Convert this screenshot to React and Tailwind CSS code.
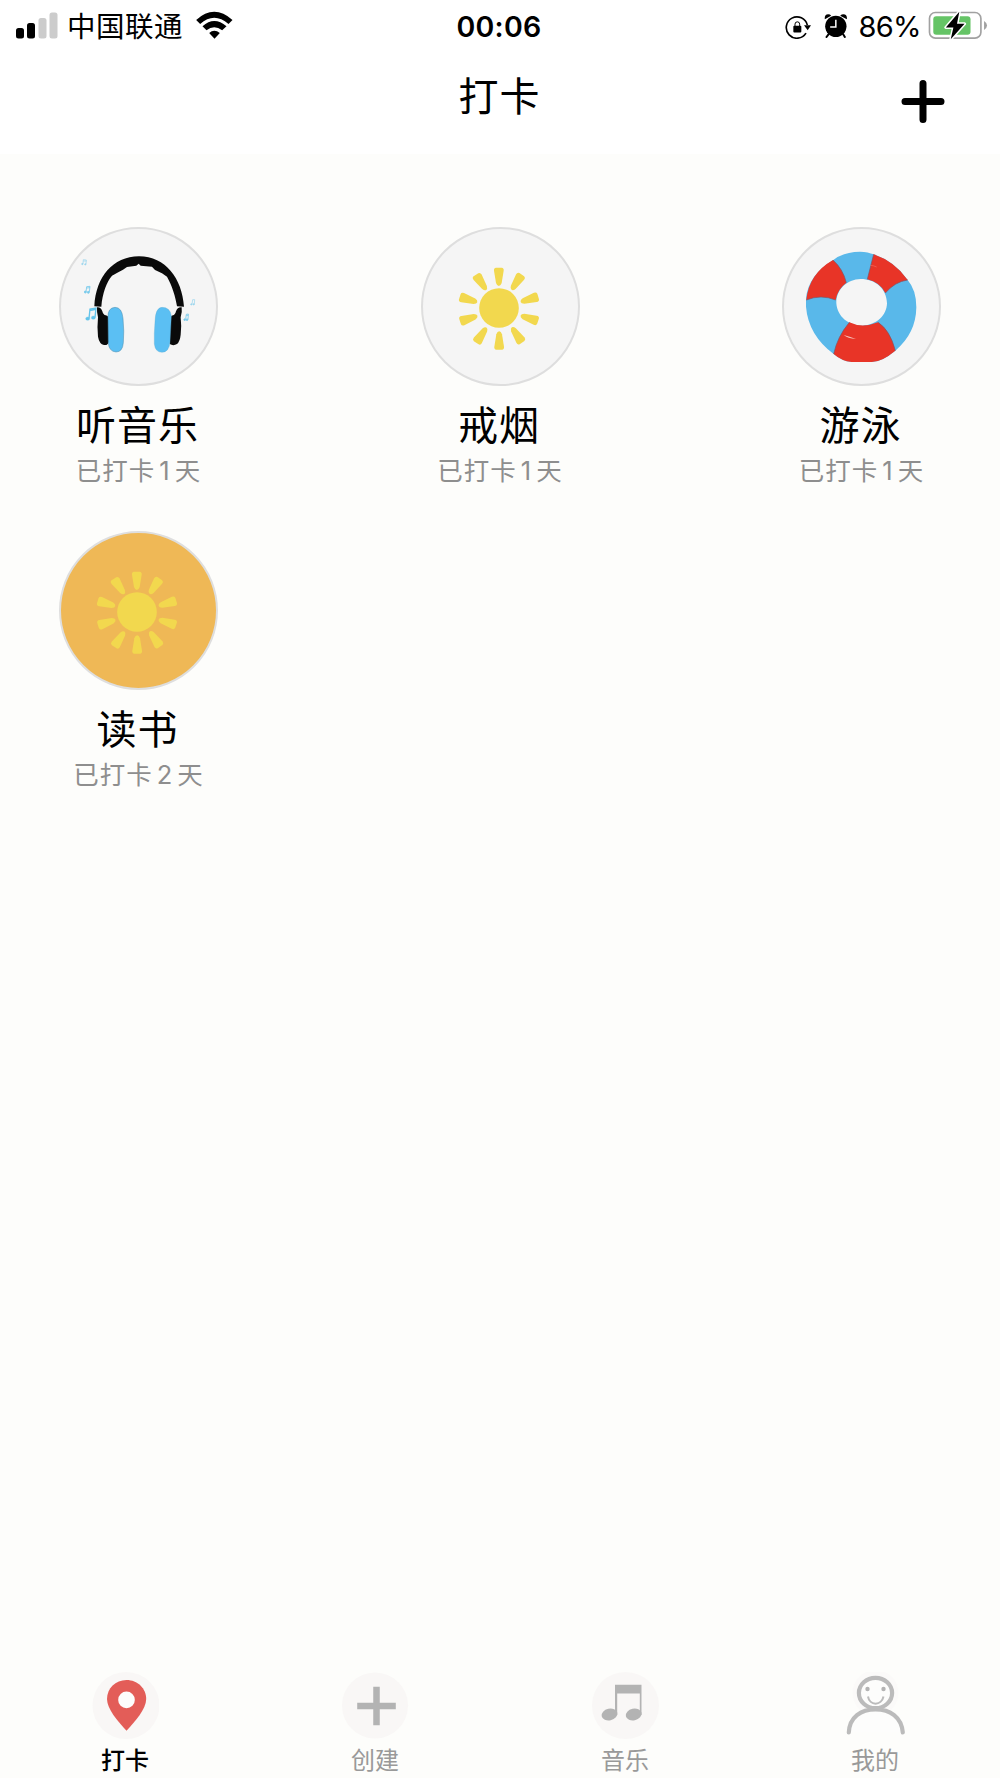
const Headphones = () => (
  <svg viewBox="63 57 465 465" className="w-full h-full">
    <path
      d="M163 289 C168 200 218 140 297 139 C377 140 426 205 432 290 L411 289 C407 262 396 226 381 200 L366 190 L345 180 L336 170 L302 167 L296 161 L289 167 L261 171 L249 179 L232 188 L216 197 C200 215 187 250 184 290 Z"
      fill="#0a0a0a"
    />
    <path d="M171 292 Q182 290 187 304 Q190 315 197 316 Q207 318 207 330 V396 Q203 407 192 405 Q178 402 174 380 Q171 350 174 322 Q170 306 171 292 Z" fill="#0a0a0a" />
    <path d="M425 292 Q413 290 408 304 Q405 315 399 316 Q390 318 389 330 V402 Q400 409 411 402 Q420 394 422 374 Q425 346 422 322 Q427 306 425 292 Z" fill="#0a0a0a" />
    <path d="M204 320 Q203 294 225 292 Q246 292 249 325 Q253 365 250 398 Q248 426 228 426 Q207 424 205 400 Z" fill="#5bbff3" stroke="#4a8aab" strokeWidth="1.5" />
    <path d="M394 318 Q391 292 366 292 Q346 293 345 335 Q342 370 343 402 Q346 427 366 427 Q388 426 390 395 Z" fill="#5bbff3" stroke="#5fa9cf" strokeWidth="1" />
    <g fill="#62c3ea" stroke="#62c3ea">
      <g>
        <ellipse cx="143" cy="326" rx="6" ry="5" />
        <ellipse cx="160" cy="323" rx="6" ry="5" />
        <path d="M147 325 L150 297 L168 294 L165 322 M149 302 L168 298" strokeWidth="4" fill="none" />
      </g>
      <g opacity=".85" strokeWidth="2.5">
        <path d="M138 246 L140 230 L150 229 L148 246 M140 234 L150 233" fill="none" />
        <circle cx="136" cy="246" r="3" />
        <circle cx="145" cy="247" r="3" />
        <path d="M437 328 L439 313 L445 312 L444 328 M439 316 L445 316" fill="none" />
        <circle cx="434" cy="329" r="2.5" />
        <circle cx="441" cy="329" r="2.5" />
      </g>
      <g opacity=".65" strokeWidth="2">
        <path d="M129 162 L130 149 L139 150 L138 162 M130 153 L139 153" fill="none" />
        <circle cx="127" cy="162" r="2" />
        <circle cx="136" cy="163" r="2" />
        <path d="M456 283 L458 269 L464 269 L463 283" fill="none" />
        <circle cx="454" cy="283" r="2" />
        <circle cx="461" cy="283" r="2" />
      </g>
    </g>
  </svg>
);

const rays = [0, 34, 73, 108, 146, 180, 214, 252, 287, 326];

const Sun = () => (
  <svg viewBox="68 57 465 465" className="w-full h-full">
    <g fill="#f2d84e">
      <circle cx="296" cy="294" r="59.5" />
      {rays.map((r) => (
        <path
          key={r}
          transform={`rotate(${r} 296 296)`}
          d="M287 173 H304 Q311 174 310 182 L304 219 Q301 228 295.500 228 Q290 228 287 219 L281 182 Q280 174 287 173 Z"
        />
      ))}
    </g>
  </svg>
);

const LifeRing = () => (
  <svg viewBox="72 57 465 465" className="w-full h-full">
    <path
      fillRule="evenodd"
      fill="#59b8ea"
      d="M220 150 Q250 126 300 125 Q325 126 341 133 Q405 155 443 210 Q469 240 469 292 Q468 370 406 422 Q365 456 335 456 H275 Q245 453 221 432 Q145 375 138 290 V265 Q145 195 220 150 Z M302 207 C260 208 228 240 229 280 C232 320 265 347 307 347 C350 345 380 317 381 280 C380 235 345 207 302 207 Z"
    />
    <g fill="#e83427">
      <path d="M219 150 Q249 177 259 218 Q232 238 227 270 Q183 252 139 270 Q147 191 219 150 Z" />
      <path d="M341 133 Q405 155 443 210 Q405 215 376 249 Q360 217 322 208 Z" />
      <path d="M268 337 Q307 356 354 337 Q390 360 406 422 Q365 456 335 456 H275 Q245 453 221 432 Q232 380 268 337 Z" />
    </g>
    <g fill="none" stroke="#7d5565" strokeWidth="2">
      <path d="M219 150 Q249 177 259 218 M227 270 Q183 252 139 270" />
      <path d="M341 133 L322 208 M443 210 Q405 215 376 249" />
      <path d="M268 337 Q232 380 221 432 M354 337 Q390 360 406 422" />
    </g>
    <path d="M251 375 Q263 386 288 387 Q268 379 251 375 Z" fill="#f7c4bd" />
    <path d="M330 166 Q340 166 350 171" stroke="#ef6b5f" strokeWidth="2" fill="none" />
  </svg>
);

const PinIcon = () => (
  <svg viewBox="0 0 67 67" className="w-[67px] h-[67px]">
    <circle cx="34" cy="33.5" r="33.5" fill="#f9f7f6" />
    <path
      fill="#e35d58"
      d="M34.500 8 C45.500 8 54.200 16.500 54.200 27 C54.200 37 43.500 49 34.500 58.800 C25.500 49 15 37 15 27 C15 16.500 23.500 8 34.500 8 Z"
    />
    <circle cx="34.500" cy="27.900" r="8.300" fill="#fdfdfc" />
  </svg>
);

const CreateIcon = () => (
  <svg viewBox="0 0 67 67" className="w-[67px] h-[67px]">
    <circle cx="33" cy="33.500" r="33" fill="#f9f7f6" />
    <path d="M34.500 14.700 V53.300 M15.200 34 H53.800" stroke="#b3b3b3" strokeWidth="6.500" />
  </svg>
);

const MusicIcon = () => (
  <svg viewBox="0 0 67 67" className="w-[67px] h-[67px]">
    <circle cx="33.500" cy="33.500" r="33.500" fill="#f9f7f6" />
    <g fill="#b3b3b3">
      <path d="M23 12.800 H49.500 V43 H47.800 V21.500 H25.200 V43 H23 Z" />
      <ellipse cx="17.500" cy="42.500" rx="8" ry="5.800" transform="rotate(-12 17.500 42.500)" />
      <ellipse cx="41.700" cy="42.500" rx="8" ry="5.800" transform="rotate(-12 41.700 42.500)" />
    </g>
  </svg>
);

const MineIcon = () => (
  <svg viewBox="0 0 67 67" className="w-[67px] h-[67px]">
    <circle cx="33.500" cy="21" r="23" fill="#fbfaf9" />
    <g fill="none" stroke="#bbbbbb" strokeWidth="4.200" strokeLinecap="round">
      <path d="M6.800 60.500 C7.500 45 19 37.300 33.500 37.300 C48 37.300 59.500 45 60.800 60.500" fill="#fdfdfc" />
      <ellipse cx="33.500" cy="21" rx="16.600" ry="15.200" fill="#fdfdfc" />
    </g>
    <path d="M26 24.500 C27.500 34 39.500 34 41.500 24.500" fill="none" stroke="#bbb" strokeWidth="2" />
    <circle cx="25.500" cy="17" r="2.200" fill="#b3b3b3" />
    <circle cx="41.500" cy="17" r="2.200" fill="#b3b3b3" />
  </svg>
);

const habits = [
  { name: "听音乐", days: 1, icon: Headphones, bg: "bg-[#f5f5f5]" },
  { name: "戒烟", days: 1, icon: Sun, bg: "bg-[#f5f5f5]" },
  { name: "游泳", days: 1, icon: LifeRing, bg: "bg-[#f5f5f5]" },
  { name: "读书", days: 2, icon: Sun, bg: "bg-[#efb856]" },
];

const tabs = [
  { label: "打卡", icon: PinIcon, color: "text-black font-medium" },
  { label: "创建", icon: CreateIcon, color: "text-[#999]" },
  { label: "音乐", icon: MusicIcon, color: "text-[#999]" },
  { label: "我的", icon: MineIcon, color: "text-[#999]" },
];

const StatusBar = () => (
  <div className="grid grid-cols-3 items-center h-[50px] pl-4 pr-[13px] text-black">
    <div className="flex items-center">
      <svg viewBox="0 0 42 27" className="-mt-[2px] w-[42px] h-[27px]">
        <rect x="0" y="16" width="8" height="10.500" rx="2.500" />
        <rect x="11" y="11" width="8" height="15.500" rx="2.500" />
        <rect x="22.500" y="6" width="8" height="20.500" rx="2.500" fill="#ccc" />
        <rect x="33.500" y="0.500" width="8" height="26" rx="2.500" fill="#ccc" />
      </svg>
      <span className="ml-[9px] pt-[2px] text-[28.5px] leading-[50px] tracking-[0.5px]">中国联通</span>
      <svg viewBox="588 28 110 84" className="ml-[13px] -mt-[3px] w-[37px] h-[28px]">
        <path d="M588 55 Q642 6 697 55 L685 67 Q642 29 600 67 Z" />
        <path d="M607 74 Q642 42 679 74 L666 86 Q642 67 619 86 Z" />
        <path d="M627 94 Q642 80 659 94 L643 111 Z" />
      </svg>
    </div>
    <div className="-ml-[5px] pt-[1px] text-center text-[28.5px] font-semibold leading-[50px] tracking-[0.3px]">00:06</div>
    <div className="flex items-center justify-end">
      <svg viewBox="80 38 78 74" className="w-[26px] h-[25px]">
        <path d="M143 95 A32 32 0 1 1 147 71" fill="none" stroke="#000" strokeWidth="5" />
        <path d="M137 71 H158 L148 86 Z" />
        <rect x="105" y="73" width="24" height="20" rx="3" />
        <path d="M110 74 V68 Q110 61 117 61 Q124 61 124 68 V74" fill="none" stroke="#000" strokeWidth="3" />
      </svg>
      <svg viewBox="196 38 68 72" className="ml-[13px] w-[23px] h-[24px]">
        <circle cx="231" cy="75" r="32" />
        <path d="M198 54 Q196 40 208 39 Q214 39 217 43 Z M264 54 Q266 40 254 39 Q248 39 244 43 Z" />
        <path d="M209 99 L203 107 M253 99 L258 107" stroke="#000" strokeWidth="6" strokeLinecap="round" />
        <path d="M231 55 V77 H214" fill="none" stroke="#fff" strokeWidth="4.500" />
      </svg>
      <span className="ml-[11px] pt-[1px] text-[29px] leading-[50px] tracking-[-0.6px]">86%</span>
      <svg viewBox="503 28 180 88" className="ml-[7px] -mr-[1px] -mt-[1px] w-[60px] h-[29px]">
        <rect x="506.500" y="32.500" width="156" height="78" rx="18" fill="#fff" stroke="#a1a1a1" strokeWidth="5" />
        <rect x="518" y="44" width="113" height="56" rx="9" fill="#65c466" />
        <path d="M672 58 Q681 63 681 72 Q681 80 672 86 Z" fill="#a1a1a1" />
        <path
          d="M597 30 L556 78 H579 L571 114 L613 67 H590 Z"
          stroke="#fff"
          strokeWidth="9"
          strokeLinejoin="round"
          paintOrder="stroke"
        />
      </svg>
    </div>
  </div>
);

const HabitCard = ({ name, days, icon: Icon, bg }) => (
  <div className="flex flex-col items-center w-[159px] h-[304px]">
    <div className={`w-[159px] h-[159px] shrink-0 rounded-full border-2 border-[#dedede] ${bg}`}>
      <Icon />
    </div>
    <div className="mt-[15px] -ml-[2px] text-[40px] leading-[50px] tracking-[1px] text-black whitespace-nowrap">
      {name}
    </div>
    <div className="mt-1 text-[25.5px] leading-[32px] tracking-[1px] text-[#8e8e8e] whitespace-nowrap">
      已打卡<span className="mx-1">{days}</span>天
    </div>
  </div>
);

const App = () => {
  return (
    <div className="flex flex-col w-full h-[1778px] bg-[#fdfdfb] font-['Inter','Noto_Sans_CJK_SC',sans-serif] overflow-hidden">
      <header className="h-[154px] shrink-0 bg-white">
        <StatusBar />
        <div className="grid grid-cols-3 px-[54px]">
          <h1 className="col-start-2 pt-[2px] -ml-[1px] text-center text-[40px] leading-[90px] tracking-[1px] text-black">
            打卡
          </h1>
          <button type="button" className="justify-self-end mt-[29px] mr-[1.5px] w-[46px] h-[46px]">
            <svg viewBox="0 0 46 46" className="w-full h-full">
              <path d="M24 4.500 V40.500 M6 22.500 H42" stroke="#000" strokeWidth="7" strokeLinecap="round" />
            </svg>
          </button>
        </div>
      </header>

      <main className="grow px-[59px] pt-[73px]">
        <div className="grid grid-cols-[repeat(3,159px)] justify-between">
          {habits.map((habit) => (
            <HabitCard key={habit.name} {...habit} />
          ))}
        </div>
      </main>

      <nav className="grid grid-cols-4 h-[106px] shrink-0">
        {tabs.map(({ label, icon: Icon, color }) => (
          <button type="button" key={label} className="flex flex-col items-center">
            <Icon />
            <span className={`mt-[7px] text-[24px] leading-[30px] ${color}`}>{label}</span>
          </button>
        ))}
      </nav>
    </div>
  );
};

export default App;
